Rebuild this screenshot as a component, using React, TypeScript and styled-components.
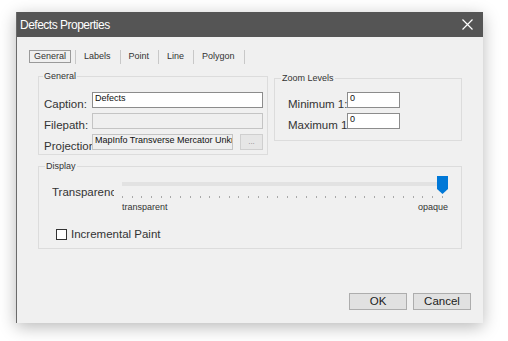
import React from 'react';
import styled, {createGlobalStyle} from 'styled-components';

const GlobalStyle = createGlobalStyle`
  body {
    margin: 0;
    background: #ffffff;
    font-family: 'Liberation Sans', Arial, sans-serif;
    color: #222;
  }
`;

const Page = styled.div`
  padding: 12px 0 0 16px;
  width: 508px;
  height: 341px;
  box-sizing: border-box;
`;

const Dialog = styled.div`
  width: 467px;
  height: 311px;
  display: flex;
  flex-direction: column;
  background: #f0f0f0;
  border-left: 1px solid #6a6a6a;
  box-sizing: border-box;
  box-shadow: 0 4px 16px rgba(0, 0, 0, 0.28);
`;

const TitleBar = styled.div`
  height: 25px;
  flex-shrink: 0;
  background: #555555;
  color: #ffffff;
  display: flex;
  align-items: center;
  justify-content: space-between;
  padding: 0 10px 0 3px;
`;

const Title = styled.div`
  font-size: 12px;
  letter-spacing: -0.5px;
`;

const Body = styled.div`
  flex: 1;
  display: flex;
  flex-direction: column;
  padding: 13px 12px 13px 12px;
`;

const TabRow = styled.div`
  display: flex;
  align-items: center;
  height: 13px;
`;

const Tab = styled.div<{first?: boolean}>`
  font-size: 9px;
  line-height: 11px;
  padding: 0 ${p => (p.first ? '4px' : '9px')} 0 ${p => (p.first ? '0' : '8px')};
  border-right: 1px solid #c8c8c8;
  height: 14px;
  display: flex;
  align-items: center;
  color: #333;
`;

const ActiveTabBox = styled.span`
  border: 1px solid #9a9a9a;
  padding: 0 4px;
  line-height: 11px;
`;

const GroupRow = styled.div<{gap?: number}>`
  display: flex;
  align-items: flex-start;
  margin-top: ${p => p.gap ?? 8}px;
  margin-left: 9px;
`;

const Group = styled.fieldset<{w: number; h: number; top?: number; left?: number}>`
  margin: ${p => p.top ?? 0}px 0 0 ${p => p.left ?? 0}px;
  width: ${p => p.w}px;
  height: ${p => p.h}px;
  box-sizing: border-box;
  border: 1px solid #dcdcdc;
  padding: 0;
  min-inline-size: 0;
`;

const Legend = styled.legend<{indent: number}>`
  font-size: 9px;
  line-height: 10px;
  padding: 0 1px;
  margin-left: ${p => p.indent}px;
  color: #333;
`;

const GroupContent = styled.div<{pt: number; pl: number}>`
  padding: ${p => p.pt}px 0 0 ${p => p.pl}px;
`;

const FieldList = styled.div`
  display: flex;
  flex-direction: column;
  gap: 5px;
`;

const FieldRow = styled.div`
  display: flex;
  align-items: flex-start;
  height: 16px;
`;

const Label = styled.div<{w: number}>`
  width: ${p => p.w}px;
  flex-shrink: 0;
  font-size: 11.5px;
  line-height: 14px;
  margin-top: 5px;
  white-space: nowrap;
  color: #333;
`;

const TextBox = styled.div<{w: number; disabled?: boolean}>`
  position: relative;
  z-index: 1;
  width: ${p => p.w}px;
  height: 16px;
  box-sizing: border-box;
  border: 1px solid ${p => (p.disabled ? '#c4c4c4' : '#8c8c8c')};
  background: ${p => (p.disabled ? '#efefef' : '#ffffff')};
  font-size: 9px;
  line-height: 11px;
  padding: 0 2px;
  white-space: nowrap;
  overflow: hidden;
  color: #111;
`;

const SmallButton = styled.div`
  margin-left: 7px;
  width: 23px;
  height: 16px;
  box-sizing: border-box;
  border: 1px solid #cfcfcf;
  background: #e6e6e6;
  color: #888;
  font-size: 8px;
  text-align: center;
  line-height: 14px;
`;

const SliderRow = styled.div`
  display: flex;
  align-items: flex-start;
`;

const ClipLabel = styled.div`
  width: 62px;
  margin-right: 8px;
  overflow: hidden;
  white-space: nowrap;
  font-size: 11.5px;
  line-height: 14px;
  margin-top: 14px;
  color: #333;
`;

const Slider = styled.div`
  position: relative;
  width: 326px;
  height: 43px;
`;

const Track = styled.div`
  margin-top: 11px;
  height: 4px;
  background: #e2e2e2;
  margin-right: 1px;
`;

const Ticks = styled.div`
  margin-top: 10px;
  height: 2px;
  display: flex;
  justify-content: space-between;
  padding: 0 5px 0 0;
`;

const Tick = styled.span`
  width: 1px;
  height: 2px;
  background: #a8a8a8;
`;

const Thumb = styled.svg`
  position: absolute;
  right: 0;
  top: 5px;
`;

const SliderLabels = styled.div`
  display: flex;
  justify-content: space-between;
  font-size: 9px;
  line-height: 11px;
  margin-top: 4px;
  color: #333;
`;

const CheckRow = styled.label`
  display: flex;
  align-items: center;
  gap: 4px;
  margin-top: 14px;
  margin-left: 4px;
  font-size: 11.5px;
  color: #333;
`;

const CheckBox = styled.span`
  width: 11px;
  height: 11px;
  box-sizing: border-box;
  border: 1px solid #333;
  background: #fff;
`;

const ButtonRow = styled.div`
  margin-top: auto;
  display: flex;
  justify-content: flex-end;
  gap: 6px;
`;

const Button = styled.div`
  width: 58px;
  height: 17px;
  box-sizing: border-box;
  border: 1px solid #adadad;
  background: #e1e1e1;
  font-size: 11.5px;
  line-height: 15px;
  text-align: center;
  color: #222;
`;

const tabs = ['General', 'Labels', 'Point', 'Line', 'Polygon'];
const tickCount = 34;

export default function App() {
  return (
    <Page>
      <GlobalStyle />
      <Dialog>
        <TitleBar>
          <Title>Defects Properties</Title>
          <svg width="11" height="11" viewBox="0 0 11 11">
            <path d="M0.5 0.5 L10.5 10.5 M10.5 0.5 L0.5 10.5" stroke="#fff" strokeWidth="1.2" />
          </svg>
        </TitleBar>
        <Body>
          <TabRow>
            {tabs.map((t, i) =>
              i === 0 ? (
                <Tab key={t} first>
                  <ActiveTabBox>{t}</ActiveTabBox>
                </Tab>
              ) : (
                <Tab key={t}>{t}</Tab>
              ),
            )}
          </TabRow>

          <GroupRow>
            <Group w={230} h={84}>
              <Legend indent={4}>General</Legend>
              <GroupContent pt={11} pl={5}>
                <FieldList>
                  <FieldRow>
                    <Label w={48}>Caption:</Label>
                    <TextBox w={171}>Defects</TextBox>
                  </FieldRow>
                  <FieldRow>
                    <Label w={48}>Filepath:</Label>
                    <TextBox w={171} disabled />
                  </FieldRow>
                  <FieldRow>
                    <Label w={48}>Projection:</Label>
                    <TextBox w={141} disabled>
                      MapInfo Transverse Mercator Unknown
                    </TextBox>
                    <SmallButton>...</SmallButton>
                  </FieldRow>
                </FieldList>
              </GroupContent>
            </Group>

            <Group w={188} h={68} top={2} left={6}>
              <Legend indent={6}>Zoom Levels</Legend>
              <GroupContent pt={9} pl={13}>
                <FieldList>
                  <FieldRow>
                    <Label w={59}>Minimum 1:</Label>
                    <TextBox w={53}>0</TextBox>
                  </FieldRow>
                  <FieldRow>
                    <Label w={59}>Maximum 1:</Label>
                    <TextBox w={53}>0</TextBox>
                  </FieldRow>
                </FieldList>
              </GroupContent>
            </Group>
          </GroupRow>

          <GroupRow gap={6}>
            <Group w={424} h={88}>
              <Legend indent={6}>Display</Legend>
              <GroupContent pt={0} pl={13}>
                <SliderRow>
                  <ClipLabel>Transparency:</ClipLabel>
                  <Slider>
                    <Track />
                    <Ticks>
                      {Array.from({length: tickCount}).map((_, i) => (
                        <Tick key={i} />
                      ))}
                    </Ticks>
                    <SliderLabels>
                      <span>transparent</span>
                      <span>opaque</span>
                    </SliderLabels>
                    <Thumb width="11" height="18" viewBox="0 0 11 18">
                      <path d="M0 0 H11 V13 L5.5 18 L0 13 Z" fill="#0078d7" />
                    </Thumb>
                  </Slider>
                </SliderRow>
                <CheckRow>
                  <CheckBox />
                  Incremental Paint
                </CheckRow>
              </GroupContent>
            </Group>
          </GroupRow>

          <ButtonRow>
            <Button>OK</Button>
            <Button>Cancel</Button>
          </ButtonRow>
        </Body>
      </Dialog>
    </Page>
  );
}
